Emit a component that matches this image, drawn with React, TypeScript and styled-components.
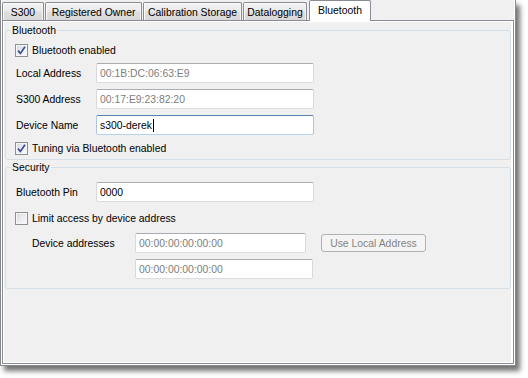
import React from 'react';
import styled, { createGlobalStyle } from 'styled-components';

const GlobalStyle = createGlobalStyle`
  html, body {
    margin: 0;
    padding: 0;
    background: #ffffff;
  }
  body {
    font-family: "Liberation Sans", Arial, sans-serif;
    font-size: 10.4px;
    color: #000;
  }
`;

const Screen = styled.div`
  width: 528px;
  height: 378px;
  background: #ffffff;
  overflow: hidden;
`;

const Window = styled.div`
  box-sizing: border-box;
  width: 516px;
  height: 366px;
  display: flex;
  flex-direction: column;
  background: #ffffff;
  border: 1px solid #85878f;
  border-top: none;
  padding: 0 1px 1px 1px;
  box-shadow: 4px 5px 5px rgba(0, 0, 0, 0.55);
`;

const TabStrip = styled.div`
  height: 20px;
  flex: none;
  display: flex;
  align-items: flex-end;
  background: #f0f0f0;
`;

const Tab = styled.div<{ $active?: boolean; $width: number; $gap: number }>`
  box-sizing: border-box;
  width: ${(p) => p.$width}px;
  margin-left: ${(p) => p.$gap}px;
  display: flex;
  align-items: center;
  justify-content: center;
  border: 1px solid #898c95;
  border-bottom: none;
  border-radius: 2px 2px 0 0;
  white-space: nowrap;
  ${(p) =>
    p.$active
      ? `
    position: relative;
    z-index: 1;
    height: 21px;
    margin-bottom: -1px;
    background: #ffffff;
    padding-bottom: 1px;
  `
      : `
    height: 18px;
    padding-top: 1px;
    background: linear-gradient(#f2f2f2 0%, #ebebeb 45%, #dedede 55%, #d8d8d8 100%);
    box-shadow: inset 1px 1px 0 #fbfbfb, inset -1px 0 0 #f4f4f4;
  `}
`;

const TabPanel = styled.div`
  flex: 1;
  display: flex;
  flex-direction: column;
  border: 1px solid #898c95;
  background: #ffffff;
  padding: 1px 2px 1px 1px;
`;

const Page = styled.div`
  flex: 1;
  background: #f0f0f0;
  padding: 2px 0 0 1px;
`;

const GroupBox = styled.fieldset<{ $mt: number; $pb: number }>`
  margin: ${(p) => p.$mt}px 0 0 0;
  padding: 0 0 ${(p) => p.$pb}px 5px;
  min-inline-size: 0;
  border: 1px solid #d5dfe5;
  border-radius: 3px;
`;

const Legend = styled.legend`
  padding: 0 1px;
  margin: 0;
  line-height: 13px;
  color: #000;
`;

const Row = styled.div<{ $mt: number; $indent: number }>`
  display: flex;
  align-items: center;
  margin-top: ${(p) => p.$mt}px;
  padding-left: ${(p) => p.$indent}px;
  height: 20px;
`;

const CheckRow = styled.div<{ $mt: number }>`
  display: flex;
  align-items: center;
  margin-top: ${(p) => p.$mt}px;
  padding-left: 4px;
  height: 13px;
  line-height: 13px;
  white-space: nowrap;
`;

const CheckBox = styled.span`
  box-sizing: border-box;
  width: 13px;
  height: 13px;
  flex: none;
  margin-right: 4px;
  border: 1px solid #8e8f8f;
  background: linear-gradient(135deg, #d6d8de 0%, #eceef2 55%, #fbfbfb 100%);
  box-shadow: inset 0 0 0 1px #f6f6f6;
  display: flex;
  align-items: center;
  justify-content: center;

  svg {
    display: block;
  }
`;

const FieldLabel = styled.span<{ $width: number }>`
  width: ${(p) => p.$width}px;
  flex: none;
  white-space: nowrap;
`;

const TextBox = styled.div<{ $width: number; $disabled?: boolean; $focused?: boolean }>`
  box-sizing: border-box;
  width: ${(p) => p.$width}px;
  height: 20px;
  flex: none;
  display: flex;
  align-items: center;
  padding: 0 3px;
  background: #ffffff;
  border: 1px solid;
  border-color: ${(p) =>
    p.$focused ? '#5b83ad #a9c7e2 #b5d3ea #a9c7e2' : '#abadb3 #d6d8dd #dadce1 #d6d8dd'};
  border-radius: 2px;
  color: ${(p) => (p.$disabled ? '#7d7d7d' : '#000')};
  white-space: nowrap;
`;

const Caret = styled.span`
  display: inline-block;
  width: 1px;
  height: 13px;
  background: #000;
  margin-left: 1px;
`;

const DisabledButton = styled.div`
  box-sizing: border-box;
  width: 105px;
  height: 18px;
  margin-left: 15px;
  flex: none;
  display: flex;
  align-items: center;
  justify-content: center;
  border: 1px solid #adb2b5;
  border-radius: 3px;
  background: #f4f4f4;
  color: #838383;
  white-space: nowrap;
`;

const Check = () => (
  <svg width="9" height="9" viewBox="0 0 9 9">
    <path d="M1 4.6 L3.4 7.4 L8 0.8" fill="none" stroke="#3b4f91" strokeWidth="1.7" />
  </svg>
);

const tabs = [
  { label: 'S300', width: 42, gap: 0 },
  { label: 'Registered Owner', width: 97, gap: 1 },
  { label: 'Calibration Storage', width: 99, gap: 1 },
  { label: 'Datalogging', width: 64, gap: 1 },
  { label: 'Bluetooth', width: 62, gap: 2, active: true },
];

export default function App() {
  return (
    <Screen>
      <GlobalStyle />
      <Window>
        <TabStrip>
          {tabs.map((t) => (
            <Tab key={t.label} $width={t.width} $gap={t.gap} $active={t.active}>
              {t.label}
            </Tab>
          ))}
        </TabStrip>
        <TabPanel>
          <Page>
            <GroupBox $mt={0} $pb={4}>
              <Legend>Bluetooth</Legend>
              <CheckRow $mt={7}>
                <CheckBox>
                  <Check />
                </CheckBox>
                Bluetooth enabled
              </CheckRow>
              <Row $mt={6} $indent={5}>
                <FieldLabel $width={80}>Local Address</FieldLabel>
                <TextBox $width={218} $disabled>
                  00:1B:DC:06:63:E9
                </TextBox>
              </Row>
              <Row $mt={6} $indent={5}>
                <FieldLabel $width={80}>S300 Address</FieldLabel>
                <TextBox $width={218} $disabled>
                  00:17:E9:23:82:20
                </TextBox>
              </Row>
              <Row $mt={6} $indent={5}>
                <FieldLabel $width={80}>Device Name</FieldLabel>
                <TextBox $width={218} $focused>
                  s300-derek
                  <Caret />
                </TextBox>
              </Row>
              <CheckRow $mt={7}>
                <CheckBox>
                  <Check />
                </CheckBox>
                Tuning via Bluetooth enabled
              </CheckRow>
            </GroupBox>

            <GroupBox $mt={1} $pb={9}>
              <Legend>Security</Legend>
              <Row $mt={8} $indent={5}>
                <FieldLabel $width={80}>Bluetooth Pin</FieldLabel>
                <TextBox $width={218}>0000</TextBox>
              </Row>
              <CheckRow $mt={10}>
                <CheckBox />
                Limit access by device address
              </CheckRow>
              <Row $mt={8} $indent={21}>
                <FieldLabel $width={103}>Device addresses</FieldLabel>
                <TextBox $width={171} $disabled>
                  00:00:00:00:00:00
                </TextBox>
                <DisabledButton>Use Local Address</DisabledButton>
              </Row>
              <Row $mt={6} $indent={124}>
                <TextBox $width={178} $disabled>
                  00:00:00:00:00:00
                </TextBox>
              </Row>
            </GroupBox>
          </Page>
        </TabPanel>
      </Window>
    </Screen>
  );
}
